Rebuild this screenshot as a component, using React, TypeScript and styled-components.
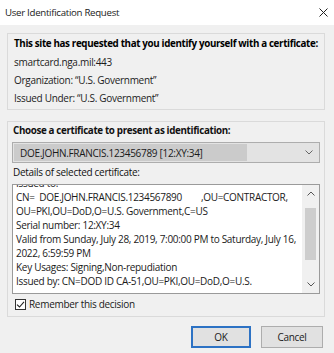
import React, { useLayoutEffect, useRef } from "react";
import styled, { createGlobalStyle } from "styled-components";

const FONT = `"Open Sans", "Noto Sans", sans-serif`;

const Global = createGlobalStyle`
  html, body { margin: 0; padding: 0; }
  body {
    background: #f0f0f0;
    font-family: ${FONT};
    color: #111;
    -webkit-font-smoothing: antialiased;
  }
`;

const Window = styled.div`
  width: 334px;
  height: 353px;
  background: #f0f0f0;
  display: flex;
  flex-direction: column;
  overflow: hidden;
`;

const TitleBar = styled.div`
  height: 25px;
  background: #ffffff;
  display: flex;
  align-items: center;
  justify-content: space-between;
  padding: 0 6px 0 5px;
  box-sizing: border-box;
`;

const Title = styled.span`
  font-size: 9.7px;
  letter-spacing: -0.3px;
  color: #1a1a1a;
`;

const CloseIcon = styled.svg`
  width: 9px;
  height: 9px;
  display: block;
`;

const Body = styled.div`
  display: flex;
  flex-direction: column;
  padding: 8px 9px 0 7px;
`;

const GroupBox = styled.div<{ $mt?: number }>`
  border: 1px solid #dadada;
  margin-top: ${(p) => p.$mt ?? 0}px;
  display: flex;
  flex-direction: column;
`;

const InfoGroup = styled(GroupBox)`
  padding: 1px 6px 2px 6px;
`;

const InfoLine = styled.div<{ $bold?: boolean }>`
  height: 18px;
  line-height: 18px;
  white-space: nowrap;
  font-size: ${(p) => (p.$bold ? "9.8px" : "10px")};
  font-weight: ${(p) => (p.$bold ? 700 : 400)};
  letter-spacing: ${(p) => (p.$bold ? "-0.35px" : "-0.3px")};
  color: ${(p) => (p.$bold ? "#000" : "#1c1c1c")};
`;

const CertGroup = styled(GroupBox)`
  padding: 0 4px 5px 4px;
`;

const Label = styled.div<{ $bold?: boolean; $mt?: number }>`
  height: 16px;
  line-height: 16px;
  margin-top: ${(p) => p.$mt ?? 0}px;
  padding-left: 1px;
  white-space: nowrap;
  font-size: ${(p) => (p.$bold ? "9.8px" : "10px")};
  font-weight: ${(p) => (p.$bold ? 700 : 400)};
  letter-spacing: ${(p) => (p.$bold ? "-0.35px" : "-0.3px")};
`;

const Select = styled.div`
  margin-top: 3px;
  height: 21px;
  box-sizing: border-box;
  border: 1px solid #adadad;
  background: #e3e3e3;
  display: flex;
  align-items: stretch;
  padding: 1px 6px 1px 1px;
`;

const SelectedValue = styled.div`
  width: 233px;
  background: #cbcbcb;
  display: flex;
  align-items: center;
  padding-left: 6px;
  box-sizing: border-box;
  font-size: 10px;
  letter-spacing: -0.3px;
  color: #1a1a1a;
  white-space: nowrap;
`;

const SelectArrow = styled.div`
  margin-left: auto;
  display: flex;
  align-items: center;
`;

const Chevron = styled.svg`
  width: 8px;
  height: 5px;
  display: block;
`;

const DetailsBox = styled.div`
  margin-top: 4px;
  height: 110px;
  box-sizing: border-box;
  border: 1px solid #9a9a9a;
  background: #ffffff;
  display: flex;
  align-items: flex-start;
`;

const DetailsText = styled.div`
  flex: 1;
  height: 104px;
  overflow: hidden;
  padding: 0 0 4px 3px;
  box-sizing: border-box;
`;

const DetailLine = styled.div`
  height: 14px;
  line-height: 14px;
  white-space: nowrap;
  font-size: 10px;
  letter-spacing: -0.3px;
  color: #1a1a1a;
`;

const Gap = styled.span`
  display: inline-block;
  width: 19px;
`;

const ScrollBar = styled.div`
  width: 17px;
  align-self: stretch;
  background: #f0f0f0;
  display: flex;
  flex-direction: column;
`;

const ScrollButton = styled.div`
  height: 17px;
  display: flex;
  align-items: center;
  justify-content: center;
`;

const ScrollTrack = styled.div`
  flex: 1;
  display: flex;
  justify-content: center;
`;

const Thumb = styled.div`
  width: 11px;
  height: 52px;
  margin-top: 6px;
  background: #cdcdcd;
`;

const CheckRow = styled.label`
  margin-top: 3px;
  height: 14px;
  display: flex;
  align-items: center;
  padding-left: 3px;
  font-size: 10px;
  letter-spacing: -0.3px;
  color: #1a1a1a;
`;

const CheckBox = styled.span`
  width: 11px;
  height: 11px;
  box-sizing: border-box;
  border: 1px solid #333;
  background: #fff;
  margin-right: 3px;
  display: flex;
  align-items: center;
  justify-content: center;
`;

const CheckIcon = styled.svg`
  width: 9px;
  height: 9px;
  display: block;
`;

const ButtonRow = styled.div`
  margin-top: 9px;
  display: flex;
  justify-content: flex-end;
  gap: 10px;
  padding-right: 2px;
`;

const Button = styled.button<{ $default?: boolean }>`
  height: 22px;
  width: ${(p) => (p.$default ? 60 : 62)}px;
  box-sizing: border-box;
  background: #e1e1e1;
  border: ${(p) => (p.$default ? "2px solid #2d72c4" : "1px solid #adadad")};
  font-family: ${FONT};
  font-size: 10px;
  letter-spacing: -0.3px;
  color: #1a1a1a;
  padding: 0;
  display: flex;
  align-items: center;
  justify-content: center;
`;

const detailLines: React.ReactNode[] = [
  "Issued to:",
  <>
    CN=&nbsp; DOE.JOHN.FRANCIS.1234567890
    <Gap />
    ,OU=CONTRACTOR,
  </>,
  "OU=PKI,OU=DoD,O=U.S. Government,C=US",
  "Serial number: 12:XY:34",
  "Valid from Sunday, July 28, 2019, 7:00:00 PM to Saturday, July 16,",
  "2022, 6:59:59 PM",
  "Key Usages: Signing,Non-repudiation",
  "Issued by: CN=DOD ID CA-51,OU=PKI,OU=DoD,O=U.S.",
];

export default function App() {
  const textRef = useRef<HTMLDivElement>(null);
  useLayoutEffect(() => {
    if (textRef.current) textRef.current.scrollTop = 9;
  }, []);

  return (
    <Window>
      <Global />
      <TitleBar>
        <Title>User Identification Request</Title>
        <CloseIcon viewBox="0 0 9 9">
          <path d="M0.5 0.5 L8.5 8.5 M8.5 0.5 L0.5 8.5" stroke="#222" strokeWidth="1" fill="none" />
        </CloseIcon>
      </TitleBar>
      <Body>
        <InfoGroup>
          <InfoLine $bold>This site has requested that you identify yourself with a certificate:</InfoLine>
          <InfoLine>smartcard.nga.mil:443</InfoLine>
          <InfoLine>Organization: “U.S. Government”</InfoLine>
          <InfoLine>Issued Under: “U.S. Government”</InfoLine>
        </InfoGroup>
        <CertGroup $mt={11}>
          <Label $bold $mt={1}>Choose a certificate to present as identification:</Label>
          <Select>
            <SelectedValue>DOE.JOHN.FRANCIS.123456789 [12:XY:34]</SelectedValue>
            <SelectArrow>
              <Chevron viewBox="0 0 8 5">
                <polyline points="0.5,0.5 4,4 7.5,0.5" stroke="#666" strokeWidth="1" fill="none" />
              </Chevron>
            </SelectArrow>
          </Select>
          <Label $mt={1}>Details of selected certificate:</Label>
          <DetailsBox>
            <DetailsText ref={textRef}>
              {detailLines.map((l, i) => (
                <DetailLine key={i}>{l}</DetailLine>
              ))}
            </DetailsText>
            <ScrollBar>
              <ScrollButton>
                <Chevron viewBox="0 0 8 5">
                  <polyline points="0.5,4.5 4,1 7.5,4.5" stroke="#555" strokeWidth="1" fill="none" />
                </Chevron>
              </ScrollButton>
              <ScrollTrack>
                <Thumb />
              </ScrollTrack>
              <ScrollButton>
                <Chevron viewBox="0 0 8 5">
                  <polyline points="0.5,0.5 4,4 7.5,0.5" stroke="#555" strokeWidth="1" fill="none" />
                </Chevron>
              </ScrollButton>
            </ScrollBar>
          </DetailsBox>
          <CheckRow>
            <CheckBox>
              <CheckIcon viewBox="0 0 9 9">
                <path d="M1 4.6 L3.5 7 L8 1.8" stroke="#222" strokeWidth="1.1" fill="none" />
              </CheckIcon>
            </CheckBox>
            Remember this decision
          </CheckRow>
        </CertGroup>
        <ButtonRow>
          <Button $default>OK</Button>
          <Button>Cancel</Button>
        </ButtonRow>
      </Body>
    </Window>
  );
}
